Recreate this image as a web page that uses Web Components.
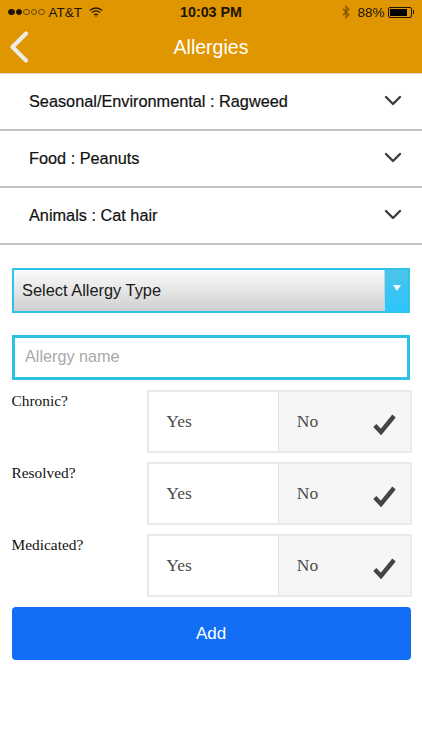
<!DOCTYPE html>
<html>
<head>
<meta charset="utf-8">
<title>Allergies</title>
<style>
  html, body { margin: 0; padding: 0; background: #fff; }
  body { width: 422px; height: 750px; overflow: hidden; font-family: "Liberation Sans", Arial, sans-serif; }
</style>
</head>
<body>
<app-header title="Allergies"></app-header>
<allergy-row>Seasonal/Environmental : Ragweed</allergy-row>
<allergy-row>Food : Peanuts</allergy-row>
<allergy-row>Animals : Cat hair</allergy-row>
<type-select>Select Allergy Type</type-select>
<name-input placeholder="Allergy name"></name-input>
<yes-no-row>Chronic?</yes-no-row>
<yes-no-row>Resolved?</yes-no-row>
<yes-no-row>Medicated?</yes-no-row>
<add-button>Add</add-button>

<script>
class AppHeader extends HTMLElement {
	connectedCallback() {
		this.attachShadow({ mode: "open" });
		this.shadowRoot.innerHTML = `
    <style>
      :host {
        display: block;
        height: 72.7px;
        background: #e09600;
        border-bottom: 1px solid #d9d5cc;
        font-family: "Liberation Sans", Arial, sans-serif;
      }
      .status {
        height: 24px;
        display: grid;
        grid-template-columns: 1fr auto 1fr;
        align-items: center;
        font-size: 13.5px;
        color: #1c1404;
        padding: 0 8px 0 8px;
      }
      .left, .right { display: flex; align-items: center; }
      .right { justify-content: flex-end; }
      .dots { display: flex; gap: 1px; margin-right: 4px; }
      .dots i { width: 6.5px; height: 6.5px; border-radius: 50%; border: 1px solid #6b4a05; box-sizing: border-box; }
      .dots i.on { background: #1c1404; border-color: #1c1404; }
      .wifi { margin-left: 7px; }
      .time { font-weight: bold; font-size: 14.3px; }
      .bt { margin-right: 7px; }
      .batt { display: flex; align-items: center; margin-left: 3px; }
      .batt b { display: block; width: 24px; height: 11px; box-sizing: border-box; border: 1px solid #1c1404; border-radius: 2px; padding: 1px; }
      .batt b::before { content: ""; display: block; width: 88%; height: 100%; background: #000; }
      .batt u { display: block; width: 1.5px; height: 4px; margin-left: 1px; background: #1c1404; }
      .nav {
        height: 48px;
        position: relative;
        display: flex;
        align-items: center;
        justify-content: center;
        color: #fff;
        font-size: 19.5px;
      }
      .nav span { position: relative; top: -1px; }
      .back { position: absolute; left: 9px; top: 7px; }
    </style>
    <div class="status">
      <div class="left">
        <div class="dots"><i class="on"></i><i class="on"></i><i></i><i></i><i></i></div>
        <span>AT&amp;T</span>
        <svg class="wifi" width="14" height="10" viewBox="0 0 14 10" fill="none" stroke="#1c1404" stroke-width="1.3">
          <path d="M.8 3.4C4.4.2 9.6.2 13.2 3.4"/>
          <path d="M3 5.6c2.400-2 5.600-2 8 0"/>
          <path d="M5.200 7.700c1.100-.8 2.500-.8 3.600 0"/>
          <circle cx="7" cy="9" r=".7" fill="#1c1404" stroke="none"/>
        </svg>
      </div>
      <div class="time">10:03 PM</div>
      <div class="right">
        <svg class="bt" width="8" height="14" viewBox="0 0 8 14" fill="none" stroke="#7a5200" stroke-width="1.200">
          <path d="M1 3.800 6.800 9.800 4 12.700V1.300L6.800 4.200 1 10.200"/>
        </svg>
        <span>88%</span>
        <div class="batt"><b></b><u></u></div>
      </div>
    </div>
    <div class="nav">
      <svg class="back" width="20" height="32" viewBox="0 0 20 32" fill="none" stroke="#ecebe6" stroke-width="4.200" stroke-linecap="round" stroke-linejoin="round">
        <path d="M17 2.500 3.500 16 17 29.500"/>
      </svg>
      <span>${this.getAttribute("title")}</span>
    </div>
		`;
	}
}
customElements.define("app-header", AppHeader);

class AllergyRow extends HTMLElement {
	connectedCallback() {
		this.attachShadow({ mode: "open" });
		this.shadowRoot.innerHTML = `
    <style>
      :host {
        display: flex;
        align-items: center;
        justify-content: space-between;
        box-sizing: border-box;
        height: 57.2px;
        padding: 0 20px 0 29px;
        border-bottom: 2px solid #c4c4c4;
        font: 16.3px "Liberation Sans", Arial, sans-serif;
        -webkit-text-stroke: 0.2px #111;
        color: #111;
      }
      svg { display: block; margin-top: -2px; }
    </style>
    <slot></slot>
    <svg width="18" height="11" viewBox="0 0 18 11" fill="none" stroke="#3d3d3d" stroke-width="2.400" stroke-linecap="round" stroke-linejoin="round">
      <path d="M2 2 9 9 16 2"/>
    </svg>
		`;
	}
}
customElements.define("allergy-row", AllergyRow);

class TypeSelect extends HTMLElement {
	connectedCallback() {
		this.attachShadow({ mode: "open" });
		this.shadowRoot.innerHTML = `
    <style>
      :host {
        display: flex;
        box-sizing: border-box;
        height: 45px;
        margin: 22.5px 12px 0;
        border: 2px solid #2ec4ea;
        font: 16.4px "Liberation Sans", Arial, sans-serif;
        color: #1a1a1a;
      }
      .label {
        flex: 1;
        display: flex;
        align-items: center;
        padding-left: 8px;
        background: linear-gradient(#fbfbfb, #cfcfcf);
        border-right: 1px solid #b8d8e2;
      }
      .arrow {
        width: 23px;
        display: flex;
        justify-content: center;
        padding-top: 15px;
        box-sizing: border-box;
        background: linear-gradient(#4cc4ea, #2cc5fb);
      }
    </style>
    <div class="label"><slot></slot></div>
    <div class="arrow">
      <svg width="8" height="6" viewBox="0 0 8 6"><path d="M0 0H8L4 6Z" fill="#f2fbff"/></svg>
    </div>
		`;
	}
}
customElements.define("type-select", TypeSelect);

class NameInput extends HTMLElement {
	connectedCallback() {
		this.attachShadow({ mode: "open" });
		this.shadowRoot.innerHTML = `
    <style>
      :host {
        display: flex;
        box-sizing: border-box;
        height: 45px;
        margin: 22.5px 12px 10px;
        border: 3px solid #2cc2e8;
        background: #fff;
      }
      input {
        flex: 1;
        min-width: 0;
        border: 0;
        outline: 0;
        padding: 0 0 3px 10px;
        background: transparent;
        font: 16.2px "Liberation Sans", Arial, sans-serif;
      }
      input::placeholder { color: #a9a9a9; opacity: 1; }
    </style>
    <input placeholder="${this.getAttribute("placeholder")}">
		`;
	}
}
customElements.define("name-input", NameInput);

class YesNoRow extends HTMLElement {
	connectedCallback() {
		this.attachShadow({ mode: "open" });
		this.shadowRoot.innerHTML = `
    <style>
      :host {
        display: grid;
        grid-template-columns: 135.3px 1fr;
        margin: 9px 10.5px 0 12px;
        height: 63px;
        font-family: "Liberation Serif", "Times New Roman", serif;
        color: #111;
      }
      .q { font-size: 15.4px; line-height: 16px; padding-top: 3px; margin-left: -0.5px; }
      .toggle {
        display: grid;
        grid-template-columns: 130px 1fr;
        box-sizing: border-box;
        border: 2px solid #e9e9e9;
        font-size: 17.5px;
        color: #4c4c4c;
      }
      .opt { display: flex; align-items: center; justify-content: space-between; box-sizing: border-box; }
      .yes { padding-left: 17px; border-right: 1px solid #e0e0e0; }
      .no { padding: 0 14px 0 17.5px; background: #f6f6f6; }
      svg { display: block; margin-top: 5px; }
    </style>
    <div class="q"><slot></slot></div>
    <div class="toggle">
      <div class="opt yes">Yes</div>
      <div class="opt no">No
        <svg width="23" height="21" viewBox="0 0 23 21" fill="none" stroke="#444" stroke-width="4.400">
          <path d="M1.800 11.500 8 18 21 2"/>
        </svg>
      </div>
    </div>
		`;
	}
}
customElements.define("yes-no-row", YesNoRow);

class AddButton extends HTMLElement {
	connectedCallback() {
		this.attachShadow({ mode: "open" });
		this.shadowRoot.innerHTML = `
    <style>
      :host {
        display: flex;
        align-items: center;
        justify-content: center;
        box-sizing: border-box;
        height: 52.5px;
        padding-top: 1px;
        margin: 10px 11.5px 0;
        border-radius: 4px;
        background: #126ef5;
        color: #fff;
        font: 17px "Liberation Sans", Arial, sans-serif;
      }
    </style>
    <slot></slot>
		`;
	}
}
customElements.define("add-button", AddButton);
</script>
</body>
</html>
